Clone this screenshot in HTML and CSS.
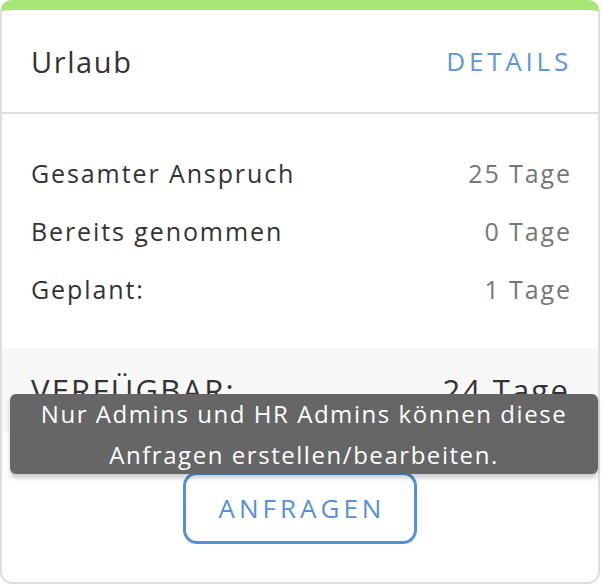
FILE: index.html
```html
<!DOCTYPE html>
<html lang="de">
<head>
  <meta charset="UTF-8" />
  <meta name="viewport" content="width=device-width, initial-scale=1.0"/>
  <title>Urlaub</title>
  <link rel="stylesheet" href="styles.css">
</head>
<body>

<div class="card">
  <div class="card-header">
    <h2>Urlaub</h2>
    <a class="details" href="#">DETAILS</a>
  </div>
  <div class="card-body">
    <div class="row">
      <span>Gesamter Anspruch</span>
      <span class="value">25 Tage</span>
    </div>
    <div class="row">
      <span>Bereits genommen</span>
      <span class="value">0 Tage</span>
    </div>
    <div class="row">
      <span>Geplant:</span>
      <span class="value">1 Tage</span>
    </div>
  </div>
  <div class="total">
    <span>VERFÜGBAR:</span>
    <span>24 Tage</span>
  </div>
  <div class="actions">
    <button class="request">ANFRAGEN</button>
    <div class="tooltip">Nur Admins und HR Admins können diese Anfragen erstellen/bearbeiten.</div>
  </div>
</div>

</body>
</html>
```

FILE: styles.css
```css
body {
  margin: 0;
  font-family: "Open Sans", sans-serif;
  background: white;
}
.card {
  width: 600px;
  height: 584px;
  box-sizing: border-box;
  border: 2px solid #dedede;
  border-top: 10px solid #a7e874;
  border-radius: 12px;
  background: white;
  position: relative;
}
.card-header {
  display: flex;
  justify-content: space-between;
  align-items: center;
  height: 102px;
  padding: 0 28px 0 29px;
  border-bottom: 2px solid #dedede;
}
.card-header h2 {
  margin: 0;
  font-size: 29px;
  font-weight: 400;
  letter-spacing: 1.6px;
  color: #333;
}
.details {
  color: #5b96e0;
  font-size: 26px;
  letter-spacing: 3.8px;
  margin-right: -2px;
  text-decoration: none;
}
.card-body {
  padding: 30px 26px 30px 29px;
}
.row {
  display: flex;
  justify-content: space-between;
  align-items: center;
  height: 58px;
  font-size: 25px;
  letter-spacing: 1.9px;
  color: #333;
}
.row .value {
  color: #777;
}
.total {
  display: flex;
  justify-content: space-between;
  align-items: center;
  height: 84px;
  box-sizing: border-box;
  padding: 0 28px 0 29px;
  background: #f7f7f7;
  font-size: 31px;
  letter-spacing: 2.2px;
  color: #333;
}
.actions {
  display: flex;
  justify-content: center;
  padding-top: 40px;
  position: relative;
}
.request {
  width: 234px;
  height: 72px;
  border: 3px solid #5590dd;
  border-radius: 14px;
  background: white;
  color: #5590dd;
  font-family: inherit;
  font-size: 26px;
  letter-spacing: 4px;
  padding: 0 0 0 4px;
}
.tooltip {
  position: absolute;
  top: -38px;
  left: 8px;
  right: 0;
  height: 80px;
  box-sizing: border-box;
  padding: 0 6px;
  display: flex;
  align-items: center;
  justify-content: center;
  text-align: center;
  background: #666;
  color: white;
  font-size: 24px;
  letter-spacing: 1.55px;
  line-height: 41px;
  border-radius: 6px;
  box-shadow: 0 4px 4px rgba(0, 0, 0, 0.2);
}
```
